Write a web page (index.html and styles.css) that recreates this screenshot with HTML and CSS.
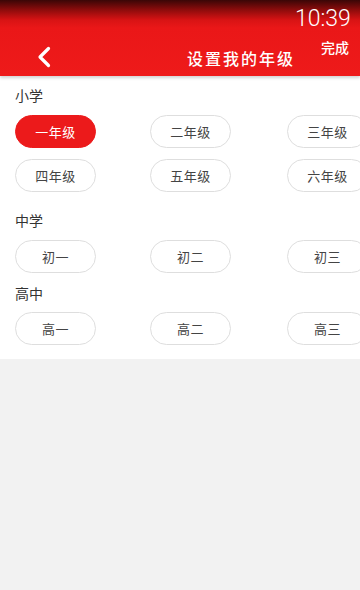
FILE: index.html
```html
<!DOCTYPE html>
<html lang="zh-CN">
<head>
<meta charset="utf-8">
<title>设置我的年级</title>
<link rel="stylesheet" href="styles.css">
</head>
<body>
<div class="page">
  <header class="header">
    <svg class="back" width="14" height="22" viewBox="0 0 14 22"><path d="M11.5 2.5 L3 11 L11.5 19.5" fill="none" stroke="#fff" stroke-width="3.2" stroke-linecap="round" stroke-linejoin="round"/></svg>
    <div class="title">设置我的年级</div>
    <div class="right">
      <div class="time">10:39</div>
      <div class="done">完成</div>
    </div>
  </header>
  <main class="content">
    <section class="sec sec-first">
      <div class="label">小学</div>
      <div class="grid">
        <div class="pill active">一年级</div>
        <div class="pill">二年级</div>
        <div class="pill">三年级</div>
        <div class="pill">四年级</div>
        <div class="pill">五年级</div>
        <div class="pill">六年级</div>
      </div>
    </section>
    <section class="sec sec-mid">
      <div class="label">中学</div>
      <div class="grid">
        <div class="pill">初一</div>
        <div class="pill">初二</div>
        <div class="pill">初三</div>
      </div>
    </section>
    <section class="sec sec-high">
      <div class="label">高中</div>
      <div class="grid grid-high">
        <div class="pill">高一</div>
        <div class="pill">高二</div>
        <div class="pill">高三</div>
      </div>
    </section>
  </main>
</div>
</body>
</html>
```
FILE: styles.css
```css
html, body {
  margin: 0;
  padding: 0;
  background: #f2f2f2;
}
body {
  font-family: "Noto Sans CJK SC", "Noto Sans", sans-serif;
  width: 360px;
  height: 590px;
  overflow: hidden;
}
.page {
  width: 360px;
}
.header {
  position: relative;
  z-index: 2;
  height: 76px;
  box-sizing: border-box;
  display: flex;
  align-items: flex-start;
  padding: 0 12px 0 37px;
  background: linear-gradient(180deg, #3a0606 0px, #8e0c0c 10px, #d81314 20px, #ea1718 28px, #ee1a1a 76px);
  box-shadow: 0 2px 3px rgba(0, 0, 0, 0.18);
  color: #fff;
}
.back {
  display: block;
  margin-top: 46px;
  flex: none;
}
.title {
  margin-left: 136px;
  margin-top: 47px;
  font-size: 16px;
  line-height: 22px;
  font-weight: 500;
  letter-spacing: 2px;
  white-space: nowrap;
}
.right {
  margin-left: auto;
  display: flex;
  flex-direction: column;
  align-items: flex-end;
  padding-top: 6px;
}
.time {
  font-family: Roboto, "Liberation Sans", sans-serif;
  font-size: 23px;
  line-height: 26px;
  font-weight: 300;
  margin-right: -2px;
}
.done {
  margin-top: 6px;
  font-size: 14px;
  line-height: 18px;
  font-weight: 500;
}
.content {
  background: #fff;
  padding: 9px 0 14px 15px;
  overflow: hidden;
}
.label {
  font-size: 14px;
  line-height: 20px;
  color: #333;
}
.grid {
  display: grid;
  grid-template-columns: 135px 137px 81px;
  row-gap: 11px;
  margin-top: 10px;
  width: 420px;
}
.grid-high {
  margin-top: 9px;
}
.sec-mid {
  margin-top: 18px;
}
.sec-high {
  margin-top: 10px;
}
.pill {
  width: 81px;
  height: 33px;
  box-sizing: border-box;
  border: 1.5px solid #dedede;
  border-radius: 17px;
  display: flex;
  align-items: center;
  justify-content: center;
  font-size: 13px;
  color: #444;
  letter-spacing: 0.5px;
  background: #fff;
}
.pill.active {
  background: #ec1a1b;
  border-color: #ec1a1b;
  color: #fff;
}
```
